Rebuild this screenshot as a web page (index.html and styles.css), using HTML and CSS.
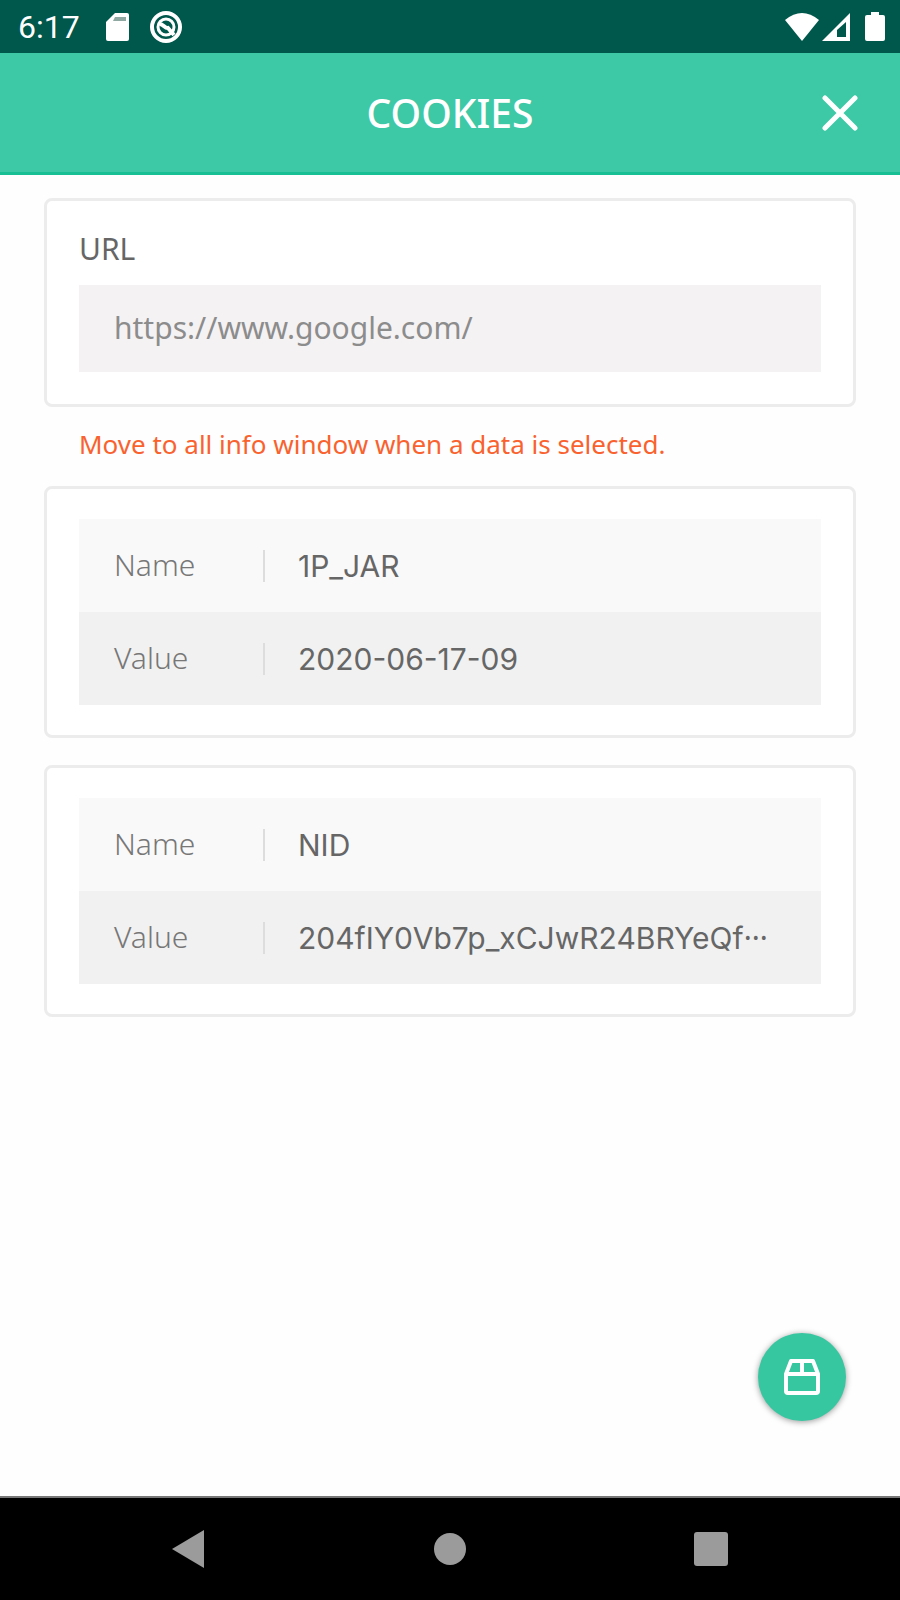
FILE: index.html
```html
<!DOCTYPE html>
<html lang="en">
<head>
    <meta charset="UTF-8">
    <meta name="viewport" content="width=device-width, initial-scale=1.0">
    <title>Cookies</title>
    <link rel="stylesheet" href="styles.css">
</head>
<body>
    <div class="status-bar">
        <div class="status-left">
            <span class="time">6:17</span>
            <svg width="24" height="30" viewBox="0 0 24 30"><path d="M9 1h12a2 2 0 0 1 2 2v24a2 2 0 0 1-2 2H2a2 2 0 0 1-2-2V10z" fill="#fff"/><path d="M9 5h11v4H7z" fill="#8fa8a2"/></svg>
            <svg width="34" height="34" viewBox="0 0 34 34" fill="none" stroke="#fff"><circle cx="17" cy="17" r="14" stroke-width="4"/><circle cx="17" cy="17" r="8" stroke-width="3"/><path d="M10 14c4-1 6 5 9 4l6 7" stroke-width="4"/></svg>
        </div>
        <div class="status-right">
            <svg width="34" height="30" viewBox="0 0 34 30"><path d="M0 8Q17-6 34 8L17 29z" fill="#fff"/></svg>
            <svg width="30" height="30" viewBox="0 0 30 30"><path d="M29 1v28H1z" fill="#fff"/><path d="M25 10v15h-9v-7z" fill="#00574b"/></svg>
            <svg class="battery" width="20" height="30" viewBox="0 0 20 30"><path d="M6 0h8v3h4a2 2 0 0 1 2 2v22a2 2 0 0 1-2 2H2a2 2 0 0 1-2-2V5a2 2 0 0 1 2-2h4z" fill="#fff"/></svg>
        </div>
    </div>

    <header class="header">
        <h1>COOKIES</h1>
        <button class="close-button" type="button" aria-label="Close">
            <svg width="36" height="36" viewBox="0 0 36 36"><path d="M3 3l30 30M33 3L3 33" stroke="#fff" stroke-width="5" stroke-linecap="round"/></svg>
        </button>
    </header>

    <main class="content">
        <div class="card url-card">
            <label for="url-input">URL</label>
            <input type="text" id="url-input" value="https://www.google.com/" readonly>
        </div>

        <p class="notice">Move to all info window when a data is selected.</p>

        <div class="card">
            <table class="cookie">
                <tr><th scope="row">Name</th><td><div class="cell">1P_JAR</div></td></tr>
                <tr><th scope="row">Value</th><td><div class="cell">2020-06-17-09</div></td></tr>
            </table>
        </div>

        <div class="card">
            <table class="cookie">
                <tr><th scope="row">Name</th><td><div class="cell">NID</div></td></tr>
                <tr><th scope="row">Value</th><td><div class="cell">204fIY0Vb7p_xCJwR24BRYeQf<span class="dots">···</span></div></td></tr>
            </table>
        </div>

        <button class="fab" type="button" aria-label="Storage">
            <svg width="36" height="36" viewBox="0 0 36 36" fill="none" stroke="#fff" stroke-width="4" stroke-linejoin="round"><path d="M2 15L7 2h22l5 13v17a2 2 0 0 1-2 2H4a2 2 0 0 1-2-2zM2 15h32M18 2v13"/></svg>
        </button>
    </main>

    <nav class="nav-bar">
        <button type="button" aria-label="Back"><svg width="34" height="38" viewBox="0 0 34 38"><path d="M0 19L32 0v38z" fill="#9b9b9b"/></svg></button>
        <button type="button" aria-label="Home"><svg width="34" height="34" viewBox="0 0 34 34"><circle cx="17" cy="17" r="16" fill="#9b9b9b"/></svg></button>
        <button type="button" aria-label="Recent apps"><svg width="34" height="34" viewBox="0 0 34 34"><rect width="34" height="34" rx="3" fill="#9b9b9b"/></svg></button>
    </nav>
</body>
</html>
```
FILE: styles.css
```css
* {
    box-sizing: border-box;
}
body {
    margin: 0;
    min-height: 100vh;
    display: flex;
    flex-direction: column;
    background: #fefefe;
    font-family: "Noto Sans", sans-serif;
    font-size: 30px;
    line-height: 40px;
    color: #666;
}
svg {
    display: block;
}
button {
    padding: 0;
    border: none;
    background: none;
    cursor: pointer;
}

/* Status bar */
.status-bar {
    display: flex;
    justify-content: space-between;
    height: 53px;
    padding: 0 15px 0 18px;
    background: #00574b;
}
.status-left, .status-right {
    display: flex;
    align-items: center;
}
.time {
    margin-right: 26px;
    font-family: Roboto, sans-serif;
    font-size: 32px;
    color: #fff;
}
.status-left svg + svg {
    margin-left: 19px;
}
.status-right {
    gap: 2px;
}
.battery {
    margin-left: 12px;
}

/* Title bar */
.header {
    display: grid;
    grid-template-columns: 1fr auto 1fr;
    align-items: center;
    height: 122px;
    padding: 0 42px;
    background: #3dc8a6;
    border-bottom: 3px solid #18bf94;
}
.header h1 {
    grid-column: 2;
    margin: 0;
    font-size: 39px;
    font-weight: 500;
    color: #fff;
}
.close-button {
    justify-self: end;
}

.content {
    position: relative;
    flex: 1;
    padding: 23px 44px;
}
.card {
    padding: 30px 32px;
    border: 3px solid #ececec;
    border-radius: 8px;
    background: #fff;
}
.card + .card {
    margin-top: 27px;
}
.url-card label {
    display: block;
    margin-bottom: 16px;
}
.url-card {
    padding-top: 28px;
    padding-bottom: 32px;
}
.url-card input {
    display: block;
    width: 100%;
    height: 87px;
    padding: 0 35px 2px;
    border: none;
    background: #f4f2f3;
    font: inherit;
    color: #8c8c8c;
}
.notice {
    margin: 17px 35px 22px;
    font-size: 26px;
    color: #f9622e;
}

/* Cookie rows */
.cookie {
    width: 100%;
    table-layout: fixed;
    border-collapse: collapse;
}
.cookie tr {
    height: 93px;
    background: #f9f9f9;
}
.cookie tr:nth-child(even) {
    background: #f1f1f1;
}
.cookie th {
    width: 184px;
    padding: 0 0 2px 35px;
    font-weight: 300;
    text-align: left;
    color: #777;
}
.cookie td {
    padding: 0;
}
.cell {
    padding-left: 33px;
    border-left: 2px solid #ddd;
    font-family: Inter, sans-serif;
    line-height: 32px;
    white-space: nowrap;
}
.dots {
    font-family: "Noto Sans", sans-serif;
}

.fab {
    position: absolute;
    right: 54px;
    bottom: 75px;
    display: flex;
    align-items: center;
    justify-content: center;
    width: 88px;
    height: 88px;
    border-radius: 50%;
    background: #36c7a1;
    box-shadow: 0 1px 6px rgba(0,0,0,0.4);
}

/* Navigation buttons */
.nav-bar {
    display: flex;
    align-items: center;
    justify-content: space-between;
    height: 104px;
    padding: 0 172px;
    background: #000;
    border-top: 2px solid #777;
}
```
